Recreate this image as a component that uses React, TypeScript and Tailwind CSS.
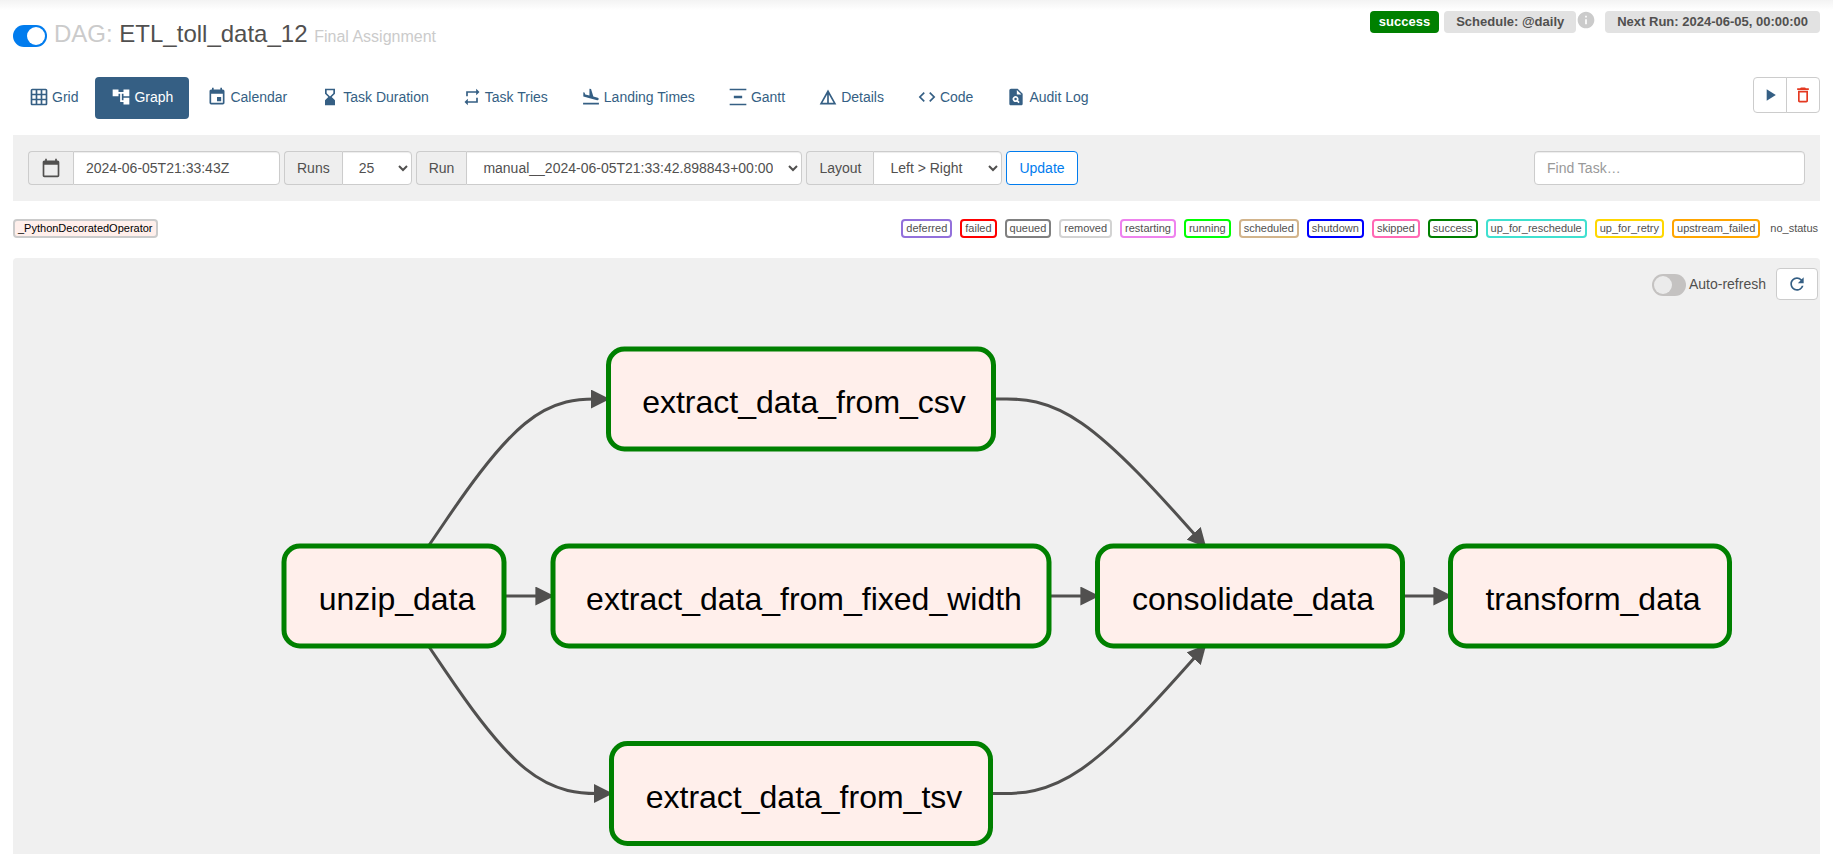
import type { ReactNode } from "react";
import type { IconType } from "react-icons";
import {
  MdAccountTree,
  MdCalendarToday,
  MdCode,
  MdDeleteOutline,
  MdDetails,
  MdEvent,
  MdFlightLand,
  MdGridOn,
  MdHourglassBottom,
  MdInfo,
  MdPlagiarism,
  MdPlayArrow,
  MdRefresh,
  MdRepeat,
  MdVerticalDistribute,
} from "react-icons/md";

type Tab = { label: string; icon: IconType; active?: boolean };

const tabs: Tab[] = [
  { label: "Grid", icon: MdGridOn },
  { label: "Graph", icon: MdAccountTree, active: true },
  { label: "Calendar", icon: MdEvent },
  { label: "Task Duration", icon: MdHourglassBottom },
  { label: "Task Tries", icon: MdRepeat },
  { label: "Landing Times", icon: MdFlightLand },
  { label: "Gantt", icon: MdVerticalDistribute },
  { label: "Details", icon: MdDetails },
  { label: "Code", icon: MdCode },
  { label: "Audit Log", icon: MdPlagiarism },
];

const states = [
  { name: "deferred", box: "border-2 border-[mediumpurple] px-[3px]" },
  { name: "failed", box: "border-2 border-[red] px-[3px]" },
  { name: "queued", box: "border-2 border-[gray] px-[3px]" },
  { name: "removed", box: "border-2 border-[lightgrey] px-[3px]" },
  { name: "restarting", box: "border-2 border-[violet] px-[3px]" },
  { name: "running", box: "border-2 border-[lime] px-[3px]" },
  { name: "scheduled", box: "border-2 border-[tan] px-[3px]" },
  { name: "shutdown", box: "border-2 border-[blue] px-[3px]" },
  { name: "skipped", box: "border-2 border-[hotpink] px-[3px]" },
  { name: "success", box: "border-2 border-[green] px-[3px]" },
  { name: "up_for_reschedule", box: "border-2 border-[turquoise] px-[3px]" },
  { name: "up_for_retry", box: "border-2 border-[gold] px-[3px]" },
  { name: "upstream_failed", box: "border-2 border-[orange] px-[3px]" },
  { name: "no_status", box: "px-0.5" },
];

type Point = [number, number];

const NODE_HEIGHT = 100;

const nodes = [
  { id: "unzip_data", cx: 381, cy: 338, width: 220 },
  { id: "extract_data_from_csv", cx: 788, cy: 141, width: 385 },
  { id: "extract_data_from_fixed_width", cx: 788, cy: 338, width: 496 },
  { id: "extract_data_from_tsv", cx: 788, cy: 535.5, width: 379 },
  { id: "consolidate_data", cx: 1237, cy: 338, width: 305 },
  { id: "transform_data", cx: 1577, cy: 338, width: 279 },
];

const edges: Point[][] = [
  [[415.5, 288], [515.5, 141], [595, 141]],
  [[491, 338], [515.5, 338], [539.5, 338]],
  [[415.5, 388], [515.5, 535.5], [598, 535.5]],
  [[980.5, 141], [1060.5, 141], [1192, 288]],
  [[1036, 338], [1060.5, 338], [1084.5, 338]],
  [[977.5, 535.5], [1060.5, 535.5], [1192, 388]],
  [[1389.5, 338], [1413.5, 338], [1437.5, 338]],
];

/** B-spline through start, bend and end, written as two cubic segments. */
function edgePath([a, b, c]: Point[]): string {
  const mix = (wa: number, wb: number, wc: number) => {
    const sum = wa + wb + wc;
    return [0, 1].map((i) => (wa * a[i] + wb * b[i] + wc * c[i]) / sum).join(",");
  };
  return [
    `M${mix(1, 0, 0)}L${mix(5, 1, 0)}`,
    `C${mix(2, 1, 0)} ${mix(1, 2, 0)} ${mix(1, 4, 1)}`,
    `C${mix(0, 2, 1)} ${mix(0, 1, 2)} ${mix(0, 1, 5)}`,
    `L${mix(0, 0, 1)}`,
  ].join("");
}

function Graph() {
  return (
    <svg viewBox="0 0 1807 596" className="block h-auto w-full" role="img" aria-label="Task graph">
      <defs>
        <marker
          id="arrowhead"
          viewBox="0 0 10 10"
          refX="9"
          refY="5"
          markerUnits="userSpaceOnUse"
          markerWidth="19"
          markerHeight="19"
          orient="auto"
        >
          <path d="M0 0L10 5L0 10z" className="fill-[#51504f]" />
        </marker>
      </defs>
      {edges.map((points) => (
        <path
          key={points.join()}
          d={edgePath(points)}
          markerEnd="url(#arrowhead)"
          className="fill-none stroke-[#51504f] stroke-3"
        />
      ))}
      {nodes.map(({ id, cx, cy, width }) => (
        <g key={id}>
          <rect
            x={cx - width / 2}
            y={cy - NODE_HEIGHT / 2}
            width={width}
            height={NODE_HEIGHT}
            rx="16"
            className="fill-[#ffefeb] stroke-[green] stroke-5"
          />
          <text x={cx + 3} y={cy + 14} textAnchor="middle" className="fill-black text-[32px]">
            {id}
          </text>
        </g>
      ))}
    </svg>
  );
}

const control =
  "h-[34px] border border-[#ccc] bg-white text-sm text-[#51504f] shadow-[inset_0_1px_1px_rgba(0,0,0,0.075)] outline-none";

function Group({ id, label, children }: { id: string; label: ReactNode; children: ReactNode }) {
  return (
    <div className="flex">
      <label
        htmlFor={id}
        className="flex items-center rounded-l border border-r-0 border-[#ccc] bg-[#eee] px-3 text-sm text-[#51504f]"
      >
        {label}
      </label>
      {children}
    </div>
  );
}

export default function App() {
  return (
    <div className="min-h-screen bg-white font-['Liberation_Sans',Arial,sans-serif] text-sm text-[#51504f]">
      <div className="h-2.5 bg-linear-to-b from-[#f3f3f3] to-white" />
      <main className="px-[13px]">
        <header className="flex items-start justify-between">
          <div className="flex items-center gap-[7px] pt-2">
            <input
              type="checkbox"
              defaultChecked
              aria-label="Pause or unpause DAG"
              className="mt-1 flex h-[22px] w-[34px] appearance-none items-center rounded-full bg-[#017cee] px-0.5 before:ml-auto before:size-[18px] before:rounded-full before:bg-white"
            />
            <h1 className="text-2xl leading-8">
              <span className="text-[#cbcbcb]">DAG:</span> ETL_toll_data_12{" "}
              <span className="text-base text-[#cbcbcb]">Final Assignment</span>
            </h1>
          </div>
          <div className="flex items-center text-[13px] leading-[22px] font-bold">
            <a href="#runs" className="rounded bg-[green] px-[9px] text-white">
              success
            </a>
            <a href="#schedule" className="ml-[5px] rounded bg-[#e2e2e2] px-3">
              Schedule: @daily
            </a>
            <MdInfo className="mb-1 size-5 text-[#cbcbcb]" />
            <span className="ml-[9px] rounded bg-[#e2e2e2] px-3">Next Run: 2024-06-05, 00:00:00</span>
          </div>
        </header>

        <div className="mt-[27px] flex items-start justify-between">
          <nav className="flex gap-0.5">
            {tabs.map(({ label, icon: Icon, active }) => (
              <a
                key={label}
                href={"#" + label.toLowerCase().replace(" ", "-")}
                className={
                  active
                    ? "flex h-[42px] items-center gap-[3px] rounded bg-[#355f84] px-4 pb-0.5 text-white"
                    : "flex h-[42px] items-center gap-[3px] rounded pr-[15px] pb-0.5 pl-4 text-[#355f84]"
                }
              >
                <Icon className="size-5" />
                {label}
              </a>
            ))}
          </nav>
          <div className="flex">
            <button
              aria-label="Trigger DAG"
              className="flex h-9 items-center rounded-l border border-[#ccc] px-1.5 text-[#355f84]"
            >
              <MdPlayArrow className="size-5" />
            </button>
            <button
              aria-label="Delete DAG"
              className="-ml-px flex h-9 items-center rounded-r border border-[#ccc] px-1.5 text-[#e43921]"
            >
              <MdDeleteOutline className="size-5" />
            </button>
          </div>
        </div>

        <form className="mt-4 flex items-center justify-between bg-[#f0f0f0] px-[15px] py-4">
          <div className="flex gap-1">
            <Group id="base_date" label={<MdCalendarToday aria-label="Base date" className="size-5" />}>
              <input
                id="base_date"
                type="text"
                defaultValue="2024-06-05T21:33:43Z"
                className={control + " w-[207px] rounded-r px-3"}
              />
            </Group>
            <Group id="num_runs" label="Runs">
              <select id="num_runs" className={control + " w-[70px] rounded-r px-3"}>
                <option>25</option>
              </select>
            </Group>
            <Group id="execution_date" label="Run">
              <select id="execution_date" className={control + " w-[336px] rounded-r px-3"}>
                <option>manual__2024-06-05T21:33:42.898843+00:00</option>
              </select>
            </Group>
            <Group id="arrange" label="Layout">
              <select id="arrange" className={control + " w-[129px] rounded-r px-3"}>
                <option>Left &gt; Right</option>
              </select>
            </Group>
            <button
              type="button"
              className="h-[34px] rounded border border-[#017cee] bg-white px-3 text-sm text-[#017cee]"
            >
              Update
            </button>
          </div>
          <input
            type="text"
            aria-label="Find Task"
            placeholder="Find Task…"
            className={control + " w-[271px] rounded px-3 placeholder:text-[#999]"}
          />
        </form>

        <div className="mt-[18px] flex items-center justify-between text-[11px] leading-[15px]">
          <span className="rounded border-2 border-[#cbcbcb] bg-[#ffefeb] px-[3px] text-black">
            _PythonDecoratedOperator
          </span>
          <div className="flex items-center gap-2">
            {states.map(({ name, box }) => (
              <span key={name} className={box + " rounded bg-white"}>
                {name}
              </span>
            ))}
          </div>
        </div>

        <section className="relative mt-5 rounded-t bg-[#f0f0f0]">
          <Graph />
          <div className="absolute top-2.5 right-0.5 flex items-center">
            <input
              id="auto_refresh"
              type="checkbox"
              className="mt-0.5 flex h-[22px] w-[34px] appearance-none items-center rounded-full bg-[#c4c2c1] px-0.5 before:size-[18px] before:rounded-full before:bg-[#ebebeb]"
            />
            <label htmlFor="auto_refresh" className="pl-[3px]">
              Auto-refresh
            </label>
            <button
              aria-label="Refresh"
              className="ml-2.5 flex h-8 items-center rounded-sm border border-[#ccc] bg-white px-2.5 text-[#355f84]"
            >
              <MdRefresh className="size-5" />
            </button>
          </div>
        </section>
      </main>
    </div>
  );
}
